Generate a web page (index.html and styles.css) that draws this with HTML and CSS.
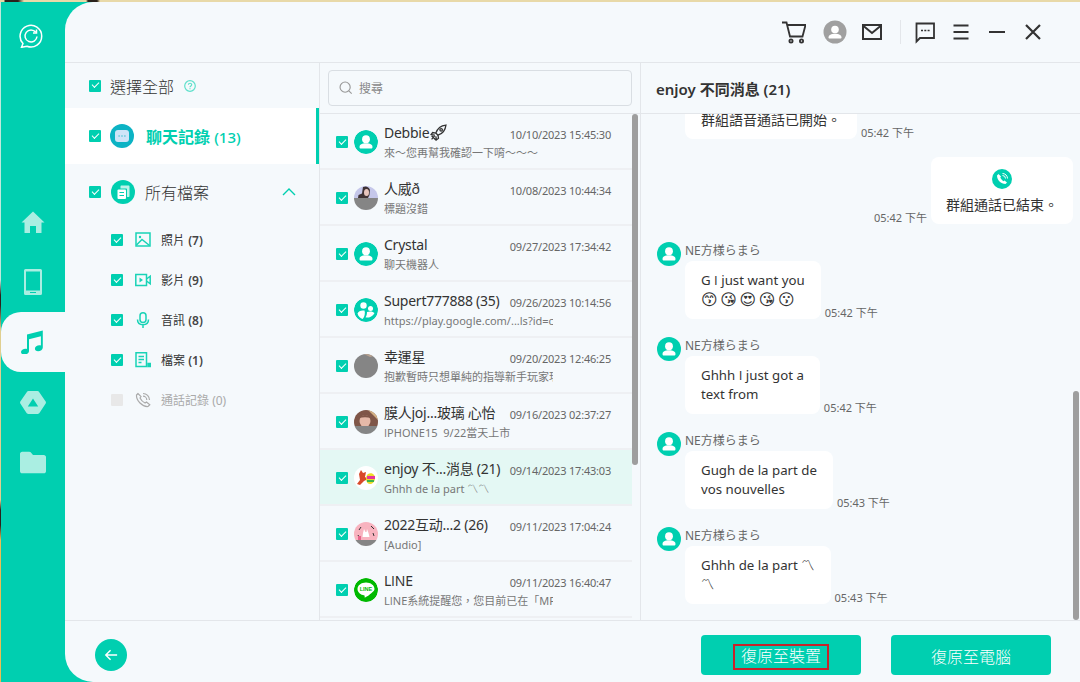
FILE: index.html
```html
<!DOCTYPE html>
<html lang="zh-Hant">
<head>
<meta charset="utf-8">
<title>Restore</title>
<link rel="stylesheet" href="styles.css">
</head>
<body>
<svg class="defs" width="0" height="0" aria-hidden="true">
  <symbol id="person" viewBox="0 0 24 24">
    <circle cx="12" cy="12" r="12" fill="#00cfb0"/>
    <circle cx="12" cy="9.2" r="3.9" fill="#fff"/>
    <path d="M5.5 17c0-2.6 2.6-3.8 6.500-3.800s6.500 1.200 6.500 3.800c0 1-.6 1.500-1.500 1.500H7c-.9 0-1.500-.5-1.500-1.500z" fill="#fff"/>
  </symbol>
</svg>
<div class="desktop">
  <div class="app">
    <aside class="rail">
      <div class="logo">
        <svg class="logo-icon" viewBox="0 0 24 24" fill="none" stroke="#fff" stroke-width="1.500">
          <path d="M4 19.500A10.800 10.800 0 1 1 8 22.200L2.500 23.300z"/>
          <path d="M16.800 8.300A6 6 0 1 0 18 12.500"/>
          <path d="M17.500 5.500v3.500h-3.500"/>
        </svg>
      </div>
      <nav class="rail-nav">
        <div class="rail-item">
          <svg class="rail-icon" viewBox="0 0 24 24" fill="#aaeee2"><path d="M12 1.500 23.500 12.500H20.500V23H15V16H9V23H3.500V12.500H.5z"/></svg>
        </div>
        <div class="rail-item">
          <svg class="rail-icon rail-tall" viewBox="0 0 18 26" fill="#aaeee2"><path fill-rule="evenodd" d="M1.500 0h15A1.500 1.500 0 0 1 18 1.500v23a1.500 1.500 0 0 1-1.500 1.500h-15A1.500 1.500 0 0 1 0 24.500v-23A1.500 1.500 0 0 1 1.500 0zM2 2.500v19h14v-19zM6 23v1h6v-1z"/></svg>
        </div>
        <div class="rail-item rail-active">
          <svg class="rail-icon" viewBox="0 0 24 24" fill="#00cfb0"><path d="M7 4.500 22.800.5V17.500c0 2.300-2.300 3.800-4.700 3.800-2 0-3.200-1-3.200-2.500 0-2 2.200-3.500 4.500-3.500.6 0 1.100.1 1.500.2V6.300L9 9.300V21c0 2.300-2.300 3.500-4.700 3.500C2.200 24.500 1 23.500 1 22c0-2 2.200-3.300 4.500-3.300.6 0 1.100.1 1.500.2z"/></svg>
        </div>
        <div class="rail-item">
          <svg class="rail-icon rail-wide" viewBox="0 0 26 23" fill="#aaeee2"><path fill-rule="evenodd" d="M8.500 0h9c.7 0 1.300.4 1.600.9l6.400 9.400c.6.800.6 1.700 0 2.500l-5.900 9c-.4.700-1 1.200-1.800 1.200H8.200c-.8 0-1.400-.5-1.800-1.200l-5.900-9c-.6-.8-.6-1.700 0-2.500L6.900.9C7.200.4 7.800 0 8.500 0zM13 7.500 7.800 15.500h10.400z"/></svg>
        </div>
        <div class="rail-item">
          <svg class="rail-icon rail-wide" viewBox="0 0 24 20" fill="#aaeee2"><path d="M2 0h6.500c.6 0 1 .2 1.400.6L12 3h10c1.100 0 2 .9 2 2v13c0 1.100-.9 2-2 2H2c-1.100 0-2-.9-2-2V2C0 .9.9 0 2 0z"/></svg>
        </div>
      </nav>
    </aside>

    <div class="main">
      <header class="topbar">
        <svg class="tb tb-cart" viewBox="0 0 24 24" fill="none" stroke="#333" stroke-width="1.800"><path d="M0 2.500h4.500L8 16.500h12.500L23.500 5H5.300"/><circle cx="9" cy="21" r="1.600"/><circle cx="19.500" cy="21" r="1.600"/></svg>
        <svg class="tb tb-user" viewBox="0 0 24 24"><circle cx="12" cy="12" r="11.500" fill="#a0a0a0"/><circle cx="12" cy="9.500" r="3.800" fill="#fff"/><path d="M5.500 17.500c0-2.600 2.800-3.800 6.500-3.800s6.500 1.200 6.500 3.800c0 .7-.5 1-1.200 1H6.700c-.7 0-1.200-.3-1.200-1z" fill="#fff"/></svg>
        <svg class="tb tb-mail" viewBox="0 0 24 24" fill="none" stroke="#333" stroke-width="2"><rect x="3" y="5" width="18" height="14"/><path d="M3.500 6 12 13l8.500-7"/></svg>
        <span class="tb-divider"></span>
        <svg class="tb" viewBox="0 0 24 24" fill="none" stroke="#333" stroke-width="1.800"><path d="M3.500 3.500h17.500v14.500H7L3.500 21.500z"/><path d="M8 10.500h2M11.300 10.500h2M14.600 10.500h2" stroke-width="1.500"/></svg>
        <svg class="tb" viewBox="0 0 24 24" fill="none" stroke="#333" stroke-width="2"><path d="M4.500 5.500h15M4.500 12h15M4.500 18.500h15"/></svg>
        <svg class="tb" viewBox="0 0 24 24" fill="none" stroke="#333" stroke-width="2"><path d="M4 12h16"/></svg>
        <svg class="tb" viewBox="0 0 24 24" fill="none" stroke="#333" stroke-width="2.200"><path d="M5 5l14 14M19 5 5 19"/></svg>
      </header>

      <div class="columns">
        <section class="col-nav">
          <div class="select-all">
            <span class="cb"></span>
            <span class="select-label">選擇全部</span>
            <svg class="help" viewBox="0 0 12 12" fill="none" stroke="#5fe0cb" stroke-width="1.200"><circle cx="6" cy="6" r="5.300"/><path d="M4.400 4.800c0-2.100 3.300-2.100 3.300 0 0 1.200-1.700 1.200-1.700 2.500M6 8.200v1.100"/></svg>
          </div>
          <div class="cat cat-active">
            <span class="cb"></span>
            <svg class="cat-icon" viewBox="0 0 24 24"><circle cx="12" cy="12" r="12" fill="#0cb3c4"/><rect x="5" y="6" width="14" height="12" rx="3" fill="#cfe4f8"/><path d="M8.500 12h1.200M11.400 12h1.200M14.300 12h1.200" stroke="#0cb3c4"/></svg>
            <span class="cat-label-strong">聊天記錄 <span class="cat-count">(13)</span></span>
          </div>
          <div class="cat cat-files">
            <span class="cb"></span>
            <svg class="cat-icon cat-icon-files" viewBox="0 0 24 24"><circle cx="12" cy="12" r="12" fill="#00cfb0"/><path d="M10.500 5.500h7c.6 0 1 .4 1 1v9.500c0 .6-.4 1-1 1h-1.500V9.500c0-.6-.4-1-1-1h-5.500V6.500c0-.6.4-1 1-1z" fill="#bdf3ea"/><rect x="6.500" y="9.500" width="8.500" height="9.500" rx="1" fill="#fff"/><path d="M8.500 12.500h4.500M8.500 15.500h4.500" stroke="#00cfb0"/></svg>
            <span class="cat-label">所有檔案</span>
            <svg class="chevron" viewBox="0 0 14 8" fill="none" stroke="#00cfb0" stroke-width="1.400"><path d="M1 7l6-6 6 6"/></svg>
          </div>
          <div class="sub">
            <span class="cb"></span>
            <svg class="sub-icon" viewBox="0 0 16 16" fill="none" stroke="#19d3b6" stroke-width="1.500"><rect x="1" y="1" width="14" height="13"/><circle cx="5" cy="5" r="1.200" fill="#19d3b6" stroke="none"/><path d="M1.500 13 7 7.500l7.500 6"/></svg>
            <span class="sub-label">照片 <b>(7)</b></span>
          </div>
          <div class="sub">
            <span class="cb"></span>
            <svg class="sub-icon" viewBox="0 0 16 16" fill="none" stroke="#19d3b6" stroke-width="1.500"><rect x=".8" y="2.500" width="10.700" height="11"/><path d="M11.500 7 15.200 4.200v7.600L11.500 9"/><path d="M4.500 5.500 8 8l-3.500 2.500z" fill="#19d3b6" stroke="none"/></svg>
            <span class="sub-label">影片 <b>(9)</b></span>
          </div>
          <div class="sub">
            <span class="cb"></span>
            <svg class="sub-icon" viewBox="0 0 16 16" fill="none" stroke="#19d3b6" stroke-width="1.500"><rect x="5" y=".8" width="6" height="9.700" rx="3"/><path d="M2.500 7.500c0 3.400 2.400 5.200 5.500 5.200s5.500-1.800 5.500-5.200M8 12.700V16"/></svg>
            <span class="sub-label">音訊 <b>(8)</b></span>
          </div>
          <div class="sub">
            <span class="cb"></span>
            <svg class="sub-icon" viewBox="0 0 16 16" fill="none" stroke="#19d3b6" stroke-width="1.500"><path d="M1 .8h10.500V14.500H1z"/><path d="M3.500 4.500h5.500M3.500 7.500h5.500M3.500 10.500h3"/><path d="M13 11.500h2.300v3H13z" fill="#19d3b6"/></svg>
            <span class="sub-label">檔案 <b>(1)</b></span>
          </div>
          <div class="sub sub-off">
            <span class="cb cb-off"></span>
            <svg class="sub-icon" viewBox="0 0 16 16" fill="none" stroke="#aaa" stroke-width="1.200"><path d="M3 1.500 1.500 3C1 8.500 7.500 15 13 14.500L14.800 12.800 11.500 10 10 11C8 10 6 8 5 6L6 4.500z"/><path d="M8 1.500A6.500 6.500 0 0 1 14.500 8M8 4.200A3.800 3.800 0 0 1 11.800 8"/></svg>
            <span class="sub-label">通話記錄 <b>(0)</b></span>
          </div>
        </section>

        <section class="col-list">
          <div class="search-wrap">
            <div class="search">
              <svg class="search-icon" viewBox="0 0 16 16" fill="none" stroke="#999" stroke-width="1.300"><circle cx="7" cy="7" r="5.800"/><path d="M11.200 11.200 14.500 14.500"/></svg>
              <span class="search-text">搜尋</span>
            </div>
          </div>
          <div class="list">
            <div class="row">
              <span class="cb"></span>
              <svg class="avatar" viewBox="0 0 24 24"><use href="#person"/></svg>
              <div class="row-body">
                <div class="row-top"><span class="row-name">Debbie<svg class="rocket" viewBox="0 0 16 16" fill="none" stroke="#333" stroke-width="1.200"><path d="M5.500 8.500C7 4 10.500 1.500 15 1c-.5 4.500-3 8-7.500 9.500z"/><circle cx="10.500" cy="5.500" r="1.200"/><path d="M5.500 8.500 2.500 8 1 10l3.500.5M7.500 10.500 8 13.500 6 15l-.5-3.500M4.500 11l-3 3.500M1.500 11l4 4"/></svg></span><span class="row-date">10/10/2023 15:45:30</span></div>
                <div class="row-sub">來～您再幫我確認一下唷～～～</div>
              </div>
            </div>
            <div class="row">
              <span class="cb"></span>
              <svg class="avatar" viewBox="0 0 24 24"><rect width="24" height="12" fill="#c5c7ea"/><path d="M9 1c3-1.500 6 0 7 3l-.5 5-1.500 3H4l.5-3 3.500-1.500L8.500 4z" fill="#3f3234"/><ellipse cx="12.500" cy="6.500" rx="2.500" ry="3.500" fill="#e7c4bc"/><rect y="12" width="24" height="12" fill="#858585"/></svg>
              <div class="row-body">
                <div class="row-top"><span class="row-name">人威ð</span><span class="row-date">10/08/2023 10:44:34</span></div>
                <div class="row-sub">標題沒錯</div>
              </div>
            </div>
            <div class="row">
              <span class="cb"></span>
              <svg class="avatar" viewBox="0 0 24 24"><use href="#person"/></svg>
              <div class="row-body">
                <div class="row-top"><span class="row-name">Crystal</span><span class="row-date">09/27/2023 17:34:42</span></div>
                <div class="row-sub">聊天機器人</div>
              </div>
            </div>
            <div class="row">
              <span class="cb"></span>
              <svg class="avatar" viewBox="0 0 24 24"><circle cx="12" cy="12" r="12" fill="#00cfb0"/><circle cx="9.500" cy="7.500" r="3.200" fill="#fff"/><circle cx="16.500" cy="10.500" r="2.500" fill="#fff"/><path d="M3.500 15.500c1-2.500 3.500-3.500 7-3 .8 2.500.3 6-1.800 8.500-2.500-.5-4.500-2.800-5.200-5.500z" fill="#fff"/><path d="M13 14c2.500-1 6-.8 7.500 1-1 2-3 4-5.500 4.500-2 .2-3 0-3.500-.3C12.500 18 13 16 13 14z" fill="#fff"/></svg>
              <div class="row-body">
                <div class="row-top"><span class="row-name">Supert777888 (35)</span><span class="row-date">09/26/2023 10:14:56</span></div>
                <div class="row-sub">https://play.google.com/...ls?id=c</div>
              </div>
            </div>
            <div class="row">
              <span class="cb"></span>
              <svg class="avatar" viewBox="0 0 24 24"><rect width="24" height="24" fill="#858585"/><path d="M10 0h14v4l-4-2-4 1z" fill="#b7a18f"/></svg>
              <div class="row-body">
                <div class="row-top"><span class="row-name">幸運星</span><span class="row-date">09/20/2023 12:46:25</span></div>
                <div class="row-sub">抱歉暫時只想單純的指導新手玩家瑪</div>
              </div>
            </div>
            <div class="row">
              <span class="cb"></span>
              <svg class="avatar" viewBox="0 0 24 24"><rect width="24" height="16" fill="#7f5648"/><path d="M14 0h10v10z" fill="#d3b083"/><ellipse cx="11" cy="11" rx="5.500" ry="6" fill="#e5b9a8"/><path d="M5 8c2-4 10-4 12 0-4-1-8-1-12 0z" fill="#7f5648"/><rect y="16" width="24" height="8" fill="#858585"/></svg>
              <div class="row-body">
                <div class="row-top"><span class="row-name">膜人joj...玻璃 心怡</span><span class="row-date">09/16/2023 02:37:27</span></div>
                <div class="row-sub"><span class="pi">I</span>PHONE15&nbsp; 9/22當天上市</div>
              </div>
            </div>
            <div class="row row-selected">
              <span class="cb"></span>
              <svg class="avatar" viewBox="0 0 24 24"><rect width="24" height="24" fill="#fff"/><path d="M5 8l2-4 2 3 3-1-1 5 3 2-4 2-4 4-3-1 3-4z" fill="#d8492a"/><path d="M14 8c3-2 7 0 7 4s-3 6-5 6-4-2-4-5 1-4 2-5z" fill="#eddc28"/><path d="M13 10h8v3h-8z" fill="#e6359c"/><path d="M13 14h7v2h-7z" fill="#3bb24a"/></svg>
              <div class="row-body">
                <div class="row-top"><span class="row-name">enjoy 不...消息 (21)</span><span class="row-date">09/14/2023 17:43:03</span></div>
                <div class="row-sub">Ghhh de la part 〽〽</div>
              </div>
            </div>
            <div class="row">
              <span class="cb"></span>
              <svg class="avatar" viewBox="0 0 24 24"><rect width="24" height="18" fill="#f8b3bf"/><rect y="18" width="24" height="6" fill="#858585"/><path d="M9 11l1-4 1.500 3h1L13 7l1.500 4 1 4h-7z" fill="#fff"/><path d="M5 8l2-3M17 4l3 3M4 13l1 2M19 11l1 3" stroke="#333" fill="none"/><rect x="4" y="14" width="3" height="4" fill="#e8658d"/></svg>
              <div class="row-body">
                <div class="row-top"><span class="row-name">2022互动...2 (26)</span><span class="row-date">09/11/2023 17:04:24</span></div>
                <div class="row-sub">[Audio]</div>
              </div>
            </div>
            <div class="row">
              <span class="cb"></span>
              <svg class="avatar" viewBox="0 0 24 24"><circle cx="12" cy="12" r="12" fill="#00b900"/><path d="M12 4.500c-4.700 0-8.500 2.900-8.500 6.500 0 3.200 3 5.900 7 6.400.5.700-.2 2 .3 2.200.5.100 5-2.700 7-4.800 1.500-1.300 2.700-2.500 2.700-3.800 0-3.600-3.800-6.500-8.500-6.500z" fill="#fff"/><text x="12" y="13" class="line-text">LINE</text></svg>
              <div class="row-body">
                <div class="row-top"><span class="row-name">L<span class="pi">I</span>NE</span><span class="row-date">09/11/2023 16:40:47</span></div>
                <div class="row-sub">L<span class="pi">I</span>NE系統提醒您，您目前已在「MF</div>
              </div>
            </div>
            <span class="scroll scroll-list"></span>
          </div>
        </section>

        <section class="col-chat">
          <div class="chat-head">enjoy 不同消息 (21)</div>
          <div class="chat">
            <div class="chat-inner">
              <div class="msg msg-clipped">
                <div class="msg-col">
                  <div class="msg-line">
                    <div class="bubble bubble-call"><span class="call-badge"></span><span>群組語音通話已開始。</span></div>
                    <span class="time">05:42 下午</span>
                  </div>
                </div>
              </div>
              <div class="msg msg-mine">
                <span class="time">05:42 下午</span>
                <div class="bubble bubble-call bubble-mine">
                  <svg class="call-badge" viewBox="0 0 20 20"><circle cx="10" cy="10" r="10" fill="#00cfb0"/><path d="M6.500 5 5 6.500c0 4.500 4 8.500 8.500 8.500l1.500-1.500-2.500-2-1.200.8C10 11 9 10 8.300 8.800L9 7.500z" fill="#fff"/><path d="M10.500 4.500a5 5 0 0 1 5 5M10.500 6.500a3 3 0 0 1 3 3" fill="none" stroke="#fff"/></svg>
                  <span>群組通話已結束。</span>
                </div>
              </div>
              <div class="msg">
                <svg class="msg-avatar" viewBox="0 0 24 24"><use href="#person"/></svg>
                <div class="msg-col">
                  <div class="msg-name">NE方様らまら</div>
                  <div class="msg-line">
                    <div class="bubble">G <span class="pi">I</span> just want you<br><span class="emoji">😙😘😍😘😗</span></div>
                    <span class="time">05:42 下午</span>
                  </div>
                </div>
              </div>
              <div class="msg">
                <svg class="msg-avatar" viewBox="0 0 24 24"><use href="#person"/></svg>
                <div class="msg-col">
                  <div class="msg-name">NE方様らまら</div>
                  <div class="msg-line">
                    <div class="bubble">Ghhh <span class="pi">I</span> just got a<br>text from</div>
                    <span class="time">05:42 下午</span>
                  </div>
                </div>
              </div>
              <div class="msg">
                <svg class="msg-avatar" viewBox="0 0 24 24"><use href="#person"/></svg>
                <div class="msg-col">
                  <div class="msg-name">NE方様らまら</div>
                  <div class="msg-line">
                    <div class="bubble">Gugh de la part de<br>vos nouvelles</div>
                    <span class="time">05:43 下午</span>
                  </div>
                </div>
              </div>
              <div class="msg">
                <svg class="msg-avatar" viewBox="0 0 24 24"><use href="#person"/></svg>
                <div class="msg-col">
                  <div class="msg-name">NE方様らまら</div>
                  <div class="msg-line">
                    <div class="bubble">Ghhh de la part 〽<br>〽</div>
                    <span class="time">05:43 下午</span>
                  </div>
                </div>
              </div>
            </div>
            <span class="scroll scroll-chat"></span>
          </div>
        </section>
      </div>

      <footer class="footer">
        <span class="back">
          <svg class="back-icon" viewBox="0 0 16 16" fill="none" stroke="#fff" stroke-width="1.600"><path d="M15 8H2M7.500 2.500 2 8l5.500 5.500"/></svg>
        </span>
        <div class="actions">
          <div class="btn"><span class="btn-mark">復原至裝置</span></div>
          <div class="btn">復原至電腦</div>
        </div>
      </footer>
    </div>
  </div>
</div>
</body>
</html>
```

FILE: styles.css
```css
* { box-sizing: border-box; }
html, body { margin: 0; height: 100%; }
body {
  width: 1080px;
  height: 682px;
  overflow: hidden;
  font-family: "Noto Sans", "Noto Sans CJK TC", sans-serif;
  color: #333;
}
.defs { position: absolute; }
.pi { font-family: "Open Sans", sans-serif; }

.desktop {
  height: 682px;
  padding: 2px 0 0 1px;
  background-color: #e8d9a8;
  background-image:
    linear-gradient(90deg, #e8d9a8 0 4px, #2a221c 5px 18px, #e8d9a8 24px 86px, #2a221c 88px 97px, #e8d9a8 100px),
    linear-gradient(180deg, #bfe9dc 0 280px, #2a221c 295px 305px, #e0cf90 330px 500px, #2a221c 510px 525px, #eabf55 540px);
  background-size: 100% 2px, 1px 100%;
  background-repeat: no-repeat;
}
.app { display: flex; height: 680px; background: #00cfb0; }

/* rail */
.rail { width: 64px; flex: none; display: flex; flex-direction: column; }
.logo { height: 190px; padding: 22px 0 0 18px; }
.logo-icon { display: block; width: 24px; height: 24px; }
.rail-nav { display: flex; flex-direction: column; }
.rail-item { height: 60px; display: flex; align-items: center; justify-content: center; padding-right: 1px; }
.rail-active { background: #f5f9fc; border-radius: 20px 0 0 20px; padding-right: 3px; }
.rail-icon { width: 24px; height: 24px; display: block; }
.rail-tall { width: 18px; height: 26px; }
.rail-wide { width: 26px; height: 23px; }

/* main */
.main {
  flex: 1;
  min-width: 0;
  display: flex;
  flex-direction: column;
  background: #f5f9fc;
  border-radius: 28px 0 0 28px;
}
.topbar {
  height: 61px;
  flex: none;
  display: flex;
  align-items: center;
  justify-content: flex-end;
  gap: 12px;
  padding-right: 35px;
  border-bottom: 1px solid #e3e6ea;
}
.tb { width: 24px; height: 24px; display: block; }
.tb-cart { margin-right: 5px; }
.tb-user { margin-right: 1px; }
.tb-mail { margin-right: 4px; }
.tb-divider { width: 1px; height: 24px; background: #e3e6ea; }

.columns { flex: 1; min-height: 0; display: flex; }

/* left categories */
.col-nav { width: 255px; flex: none; border-right: 1px solid #e3e6ea; }
.cb {
  position: relative;
  display: block;
  width: 12px;
  height: 12px;
  flex: none;
  background: #00cfb0;
  border-radius: 1px;
}
.cb::after {
  content: "";
  position: absolute;
  left: 3px;
  top: 2.500px;
  width: 6px;
  height: 3px;
  border-left: 1.600px solid #fff;
  border-bottom: 1.600px solid #fff;
  transform: rotate(-45deg);
}
.cb-off { background: #e8e8e8; }
.cb-off::after { display: none; }
.select-all { height: 45px; display: flex; align-items: center; padding-left: 24px; }
.select-label { margin-left: 9px; font-size: 16px; font-weight: 300; color: #333; }
.help { width: 12px; height: 12px; margin-left: 10px; }
.cat { height: 56px; display: flex; align-items: center; padding-left: 24px; }
.cat-active { background: #fff; border-right: 3px solid #00cfb0; }
.cat-icon { width: 24px; height: 24px; margin-left: 9px; flex: none; }
.cat-icon-files { margin-left: 10px; }
.cat-label-strong { margin-left: 12px; font-size: 16px; font-weight: 700; color: #00cfb0; }
.cat-count { font-size: 15px; font-weight: 500; }
.cat-label { margin-left: 10px; font-size: 16px; font-weight: 300; }
.chevron { width: 14px; height: 8px; margin-left: auto; margin-right: 23px; }
.sub { height: 40px; display: flex; align-items: center; padding-left: 46px; }
.sub-icon { width: 16px; height: 16px; margin-left: 12px; flex: none; }
.sub-label { margin-left: 10px; font-size: 12px; color: #333; }
.sub-label b { font-weight: 600; color: #444; }
.sub-off .sub-label, .sub-off .sub-label b { color: #aaa; font-weight: 400; }

/* list */
.col-list { width: 321px; flex: none; display: flex; flex-direction: column; border-right: 1px solid #e3e6ea; }
.search-wrap { height: 51px; flex: none; padding: 7px 8px 0; border-bottom: 1px solid #e3e6ea; }
.search {
  height: 36px;
  display: flex;
  align-items: center;
  padding-left: 10px;
  border: 1px solid #d9dee3;
  border-radius: 4px;
}
.search-icon { width: 14px; height: 14px; }
.search-text { margin-left: 6px; font-size: 12px; color: #888; }
.list { position: relative; flex: 1; min-height: 0; width: 320px; padding-right: 8px; }
.row {
  height: 56px;
  display: flex;
  align-items: flex-start;
  padding: 22px 0 0 16px;
  border-bottom: 2px solid #eef0f3;
}
.row-selected { background: #e4f8f4; }
.avatar { width: 24px; height: 24px; margin: -6px 0 0 6px; border-radius: 50%; flex: none; display: block; }
.row-body { width: 227px; margin: -14px 0 0 6px; }
.row-top { display: flex; justify-content: space-between; }
.row-name { font-size: 14px; letter-spacing: -.25px; line-height: 20px; color: #333; white-space: nowrap; display: flex; align-items: center; }
.row-date { font-size: 11px; letter-spacing: -.2px; line-height: 16px; margin-top: 5px; color: #666; white-space: nowrap; }
.row-sub {
  width: 169px;
  margin-top: 2px;
  font-size: 11px;
  line-height: 16px;
  color: #777;
  white-space: nowrap;
  overflow: hidden;
}
.rocket { width: 17px; height: 17px; margin-left: 1px; }
.line-text { font: 700 5.500px "Liberation Sans", sans-serif; fill: #00b900; text-anchor: middle; }
.scroll { position: absolute; width: 6px; background: #9e9e9e; border-radius: 3px; }
.scroll-list { left: 312px; top: 0; height: 351px; }
.scroll-chat { right: 1px; top: 277px; bottom: 0; }

/* chat */
.col-chat { flex: 1; min-width: 0; display: flex; flex-direction: column; }
.chat-head {
  height: 51px;
  flex: none;
  padding: 16px 0 0 15px;
  font-size: 15px;
  line-height: 20px;
  font-weight: 600;
  color: #333;
  border-bottom: 1px solid #e3e6ea;
}
.chat { position: relative; flex: 1; min-height: 0; overflow: hidden; }
.chat-inner { display: flex; flex-direction: column; gap: 18px; padding: 0 7px 0 16px; margin-top: -42px; }
.msg { display: flex; gap: 4px; }
.msg-clipped { padding-left: 28px; }
.msg-mine { justify-content: flex-end; align-items: flex-end; }
.msg-avatar { width: 24px; height: 24px; flex: none; display: block; }
.msg-col { min-width: 0; }
.msg-name { height: 19px; font-size: 12px; line-height: 17px; color: #666; }
.msg-line { display: flex; align-items: flex-end; gap: 4px; }
.bubble {
  padding: 10px 16px;
  background: #fff;
  border-radius: 8px;
  font-size: 13.250px;
  line-height: 19px;
  color: #333;
  white-space: nowrap;
}
.bubble-call {
  display: flex;
  flex-direction: column;
  align-items: center;
  padding-top: 12px;
  font-size: 14px;
}
.bubble-mine { padding-left: 15px; padding-right: 15px; }
.call-badge { display: block; width: 20px; height: 20px; margin-bottom: 6px; }
.emoji { display: block; height: 19px; font-family: "DejaVu Sans", sans-serif; font-size: 16px; letter-spacing: 2.600px; }
.time { font-size: 11px; line-height: 12px; color: #666; white-space: nowrap; }

/* footer */
.footer {
  height: 62px;
  flex: none;
  display: flex;
  align-items: center;
  justify-content: space-between;
  padding: 7px 29px 0 30px;
  border-top: 1px solid #e3e6ea;
}
.back {
  width: 32px;
  height: 32px;
  border-radius: 50%;
  background: #00cfb0;
  display: flex;
  align-items: center;
  justify-content: center;
}
.back-icon { width: 14px; height: 14px; }
.actions { display: flex; gap: 30px; }
.btn {
  width: 160px;
  height: 40px;
  display: flex;
  align-items: center;
  justify-content: center;
  padding-top: 2px;
  background: #00cfb0;
  border-radius: 4px;
  color: #fff;
  font-size: 16px;
  font-weight: 300;
}
.btn-mark { margin-top: 2px; padding: 0 6px; height: 26px; line-height: 21px; border: 2px solid #c8232a; }
```
